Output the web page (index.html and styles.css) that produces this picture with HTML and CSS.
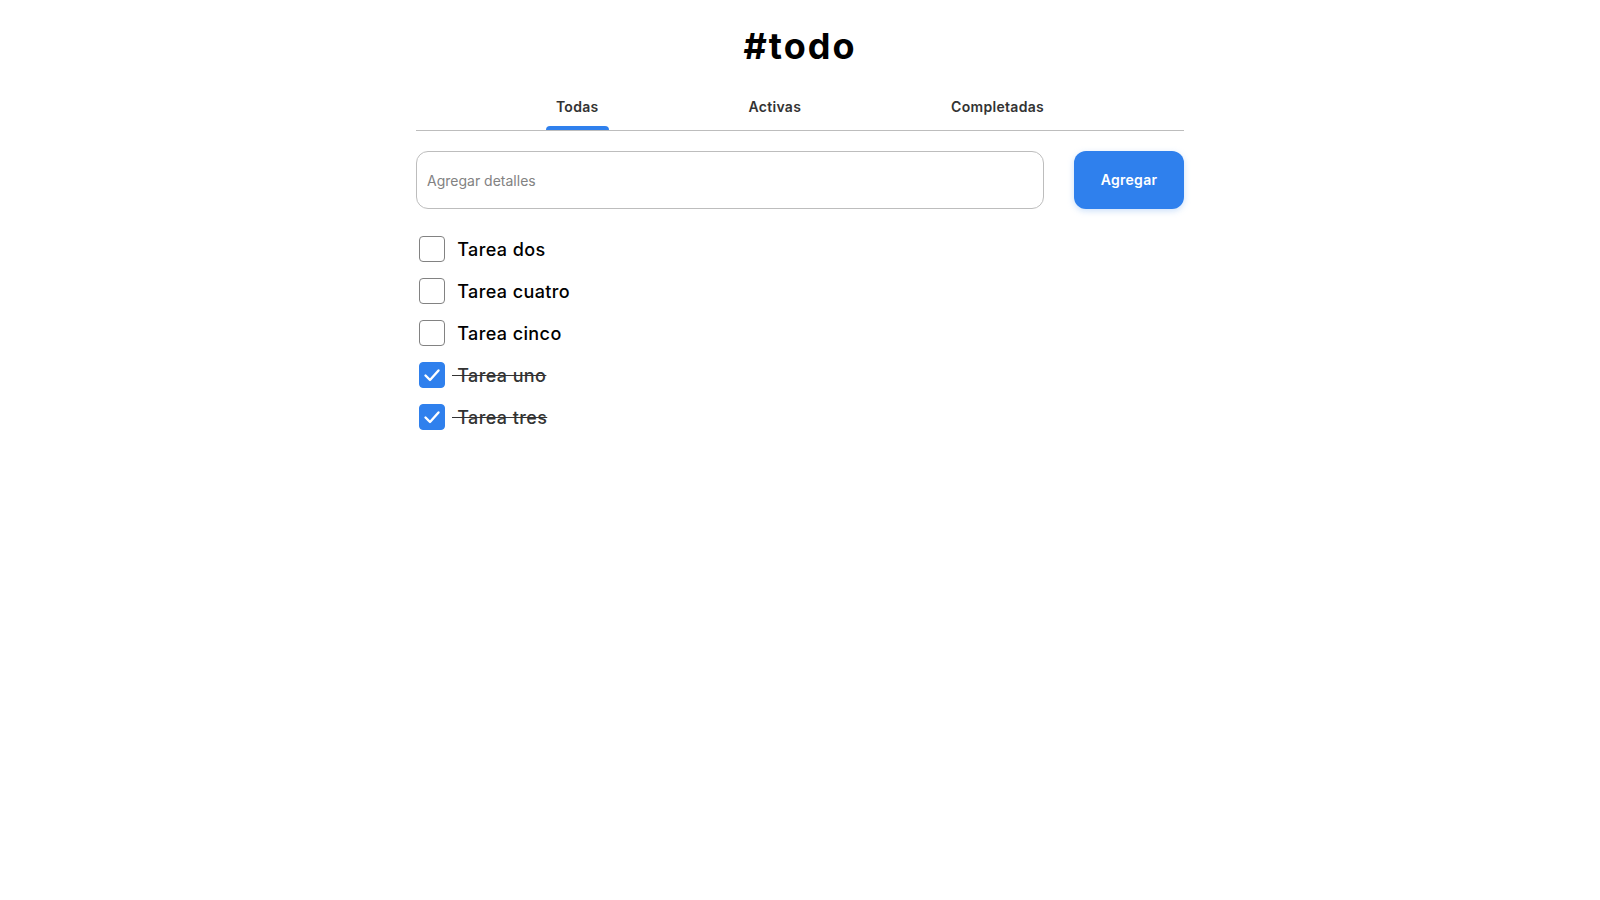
FILE: index.html
```html
<!DOCTYPE html>
<html lang="es">
<head>
<meta charset="utf-8">
<title>#todo</title>
<link rel="stylesheet" href="styles.css">
</head>
<body>
<div class="app">
  <h1 class="title">#todo</h1>
  <nav class="tabs">
    <div class="tab active"><span class="tab-label">Todas</span><span class="tab-bar"></span></div>
    <div class="tab"><span class="tab-label">Activas</span><span class="tab-bar"></span></div>
    <div class="tab"><span class="tab-label">Completadas</span><span class="tab-bar"></span></div>
  </nav>
  <form class="add-row">
    <input class="add-input" type="text" placeholder="Agregar detalles">
    <button class="add-btn" type="button">Agregar</button>
  </form>
  <ul class="list">
    <li class="item"><span class="check"></span><span class="label">&nbsp;Tarea dos</span></li>
    <li class="item"><span class="check"></span><span class="label">&nbsp;Tarea cuatro</span></li>
    <li class="item"><span class="check"></span><span class="label">&nbsp;Tarea cinco</span></li>
    <li class="item done"><span class="check"><svg viewBox="0 0 26 26" width="26" height="26"><path d="M6.5 13.5 L11 18 L19.5 8.5" fill="none" stroke="#fff" stroke-width="2.4" stroke-linecap="round" stroke-linejoin="round"/></svg></span><span class="label">&nbsp;Tarea uno</span></li>
    <li class="item done"><span class="check"><svg viewBox="0 0 26 26" width="26" height="26"><path d="M6.5 13.5 L11 18 L19.5 8.5" fill="none" stroke="#fff" stroke-width="2.4" stroke-linecap="round" stroke-linejoin="round"/></svg></span><span class="label">&nbsp;Tarea tres</span></li>
  </ul>
</div>
</body>
</html>
```
FILE: styles.css
```css
* { box-sizing: border-box; }
body {
  margin: 0;
  background: #fff;
  font-family: "Inter", "Noto Sans", sans-serif;
  color: #000;
}
.app {
  width: 768px;
  margin: 0 auto;
}
.title {
  margin: 24px 0 0;
  font-size: 36px;
  line-height: 44px;
  font-weight: 700;
  text-align: center;
  color: #000;
  letter-spacing: 2px;
}
.tabs {
  margin-top: 30px;
  display: flex;
  justify-content: space-evenly;
  border-bottom: 1px solid #bdbdbd;
}
.tab {
  display: flex;
  flex-direction: column;
  align-items: stretch;
}
.tab-label {
  padding: 0 10px;
  font-size: 14px;
  line-height: 18px;
  font-weight: 600;
  color: #333;
  letter-spacing: 0.3px;
  text-align: center;
}
.tab-bar {
  display: block;
  height: 4px;
  margin-top: 10px;
  border-radius: 4px 4px 0 0;
}
.tab.active .tab-bar { background: #2f80ed; }
.add-row {
  margin: 20px 0 0;
  display: flex;
  gap: 30px;
}
.add-input {
  flex: 1;
  height: 58px;
  border: 1px solid #bdbdbd;
  border-radius: 12px;
  padding: 0 10px;
  font-family: "Inter", sans-serif;
  font-size: 14px;
  color: #333;
  outline: none;
}
.add-input::placeholder { color: #828282; }
.add-btn {
  width: 110px;
  height: 58px;
  border: none;
  border-radius: 12px;
  background: #2f80ed;
  color: #fff;
  font-family: "Inter", sans-serif;
  font-size: 14px;
  font-weight: 600;
  letter-spacing: 0.3px;
  padding: 0 0 2px;
  box-shadow: 0 2px 6px rgba(127, 177, 243, 0.4);
}
.list {
  list-style: none;
  margin: 19px 0 0;
  padding: 0;
}
.item {
  display: flex;
  align-items: center;
  height: 42px;
}
.check {
  width: 26px;
  height: 26px;
  margin: 0 7px 0 3px;
  border: 1px solid #828282;
  border-radius: 4px;
  flex: none;
  display: flex;
}
.check svg { display: block; margin: -1px; }
.item.done .check {
  background: #2f80ed;
  border-color: #2f80ed;
}
.label {
  font-size: 18px;
  font-weight: 500;
  color: #000;
  letter-spacing: 0.4px;
}
.item.done .label {
  color: #333;
  text-decoration: line-through;
}
```
